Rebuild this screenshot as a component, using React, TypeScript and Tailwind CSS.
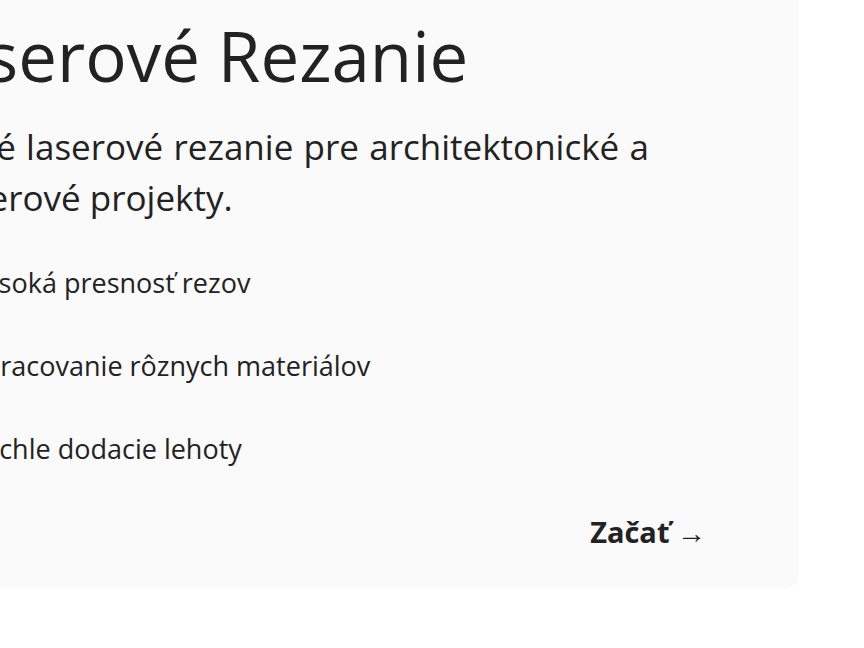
import { Check } from "lucide-react";

const features = [
  "Vysoká presnosť rezov",
  "Spracovanie rôznych materiálov",
  "Rýchle dodacie lehoty",
];

export default function App() {
  return (
    <div className="w-[864px] h-[648px] overflow-hidden bg-white font-['Open_Sans',sans-serif] text-[#222222]">
      <div className="-ml-[137px] -mt-[35px] w-[936px] rounded-2xl bg-[#fafafa] pt-12 pl-12 pr-12 pb-[36px]">
        <h1 className="text-[69px] leading-[84px] font-normal">Laserové Rezanie</h1>
        <p className="mt-6 -ml-[8px] w-[746px] text-justify text-[35px] leading-[51px]">
          Presné laserové rezanie pre architektonické a interierové projekty.
        </p>
        <ul className="mt-[40px] flex flex-col gap-[43px]">
          {features.map((f) => (
            <li key={f} className="flex items-center gap-[18px] h-10">
              <span className="flex h-10 w-10 shrink-0 items-center justify-center rounded-full bg-[#222222] text-white">
                <Check size={22} strokeWidth={2.5} />
              </span>
              <span className="text-[27px] leading-9">{f}</span>
            </li>
          ))}
        </ul>
        <div className="mt-[42px] flex justify-end">
          <a href="#" className="mr-[45px] text-[29px] leading-[42px] font-bold text-[#222222]">
            Začať →
          </a>
        </div>
      </div>
    </div>
  );
}
